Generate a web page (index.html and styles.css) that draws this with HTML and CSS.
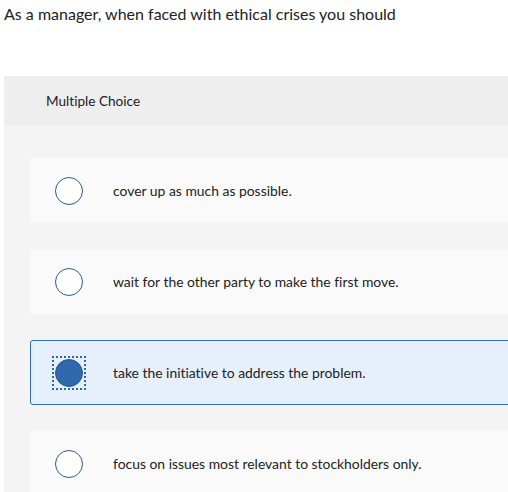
FILE: index.html
```html
<!DOCTYPE html>
<html>
<head>
  <title>Question</title>
  <link rel="stylesheet" href="styles.css">
</head>
<body>
  <p class="prompt">As a manager, when faced with ethical crises you should</p>
  <div class="question">
    <div class="question-header">Multiple Choice</div>
    <div class="choices">
      <label class="choice">
        <span class="radio"></span>
        <span class="choice-text">cover up as much as possible.</span>
      </label>
      <label class="choice">
        <span class="radio"></span>
        <span class="choice-text">wait for the other party to make the first move.</span>
      </label>
      <label class="choice selected">
        <span class="focus-ring"><span class="radio"></span></span>
        <span class="choice-text">take the initiative to address the problem.</span>
      </label>
      <label class="choice">
        <span class="radio"></span>
        <span class="choice-text">focus on issues most relevant to stockholders only.</span>
      </label>
    </div>
  </div>
</body>
</html>
```

FILE: styles.css
```css
/* quiz question layout */
body {
  margin: 0;
  padding: 0;
  overflow: hidden;
  background-color: #fff;
  font-family: Lato, "Open Sans", Arial, sans-serif;
  font-variant-ligatures: none;
  color: #222;
}

.prompt {
  margin: 0;
  padding: 4px 4px 0 4px;
  font-size: 16px;
  line-height: 20px;
}

.question {
  margin: 52px 0 0 4px;
  width: 540px;
  background-color: #f4f4f4;
}

.question-header {
  height: 50px;
  padding-left: 42px;
  display: flex;
  align-items: center;
  background-color: #eee;
  font-size: 13.6px;
}

.choices {
  display: flex;
  flex-direction: column;
  gap: 26px;
  padding: 32px 0 40px 26px;
}

.choice {
  height: 65px;
  display: flex;
  align-items: center;
  box-sizing: border-box;
  padding-left: 24px;
  background-color: #fafafa;
  border: 1px solid transparent;
  border-radius: 3px;
  font-size: 13.9px;
}

.radio {
  width: 26px;
  height: 26px;
  border: 1px solid #2a5a96;
  border-radius: 50%;
  background-color: #fff;
  flex-shrink: 0;
}

.choice > .radio {
  margin-right: 30px;
}

.choice-text {
  color: #222;
}

.selected {
  background-color: #e6f0fa;
  border-color: #2f6db5;
  padding-left: 21px;
}

.focus-ring {
  width: 30px;
  height: 30px;
  border: 2px dotted #2f68ad;
  display: flex;
  align-items: center;
  justify-content: center;
  margin-right: 27px;
}

.selected .radio {
  background-color: #2f68ad;
  border-color: #24558f;
}
```
